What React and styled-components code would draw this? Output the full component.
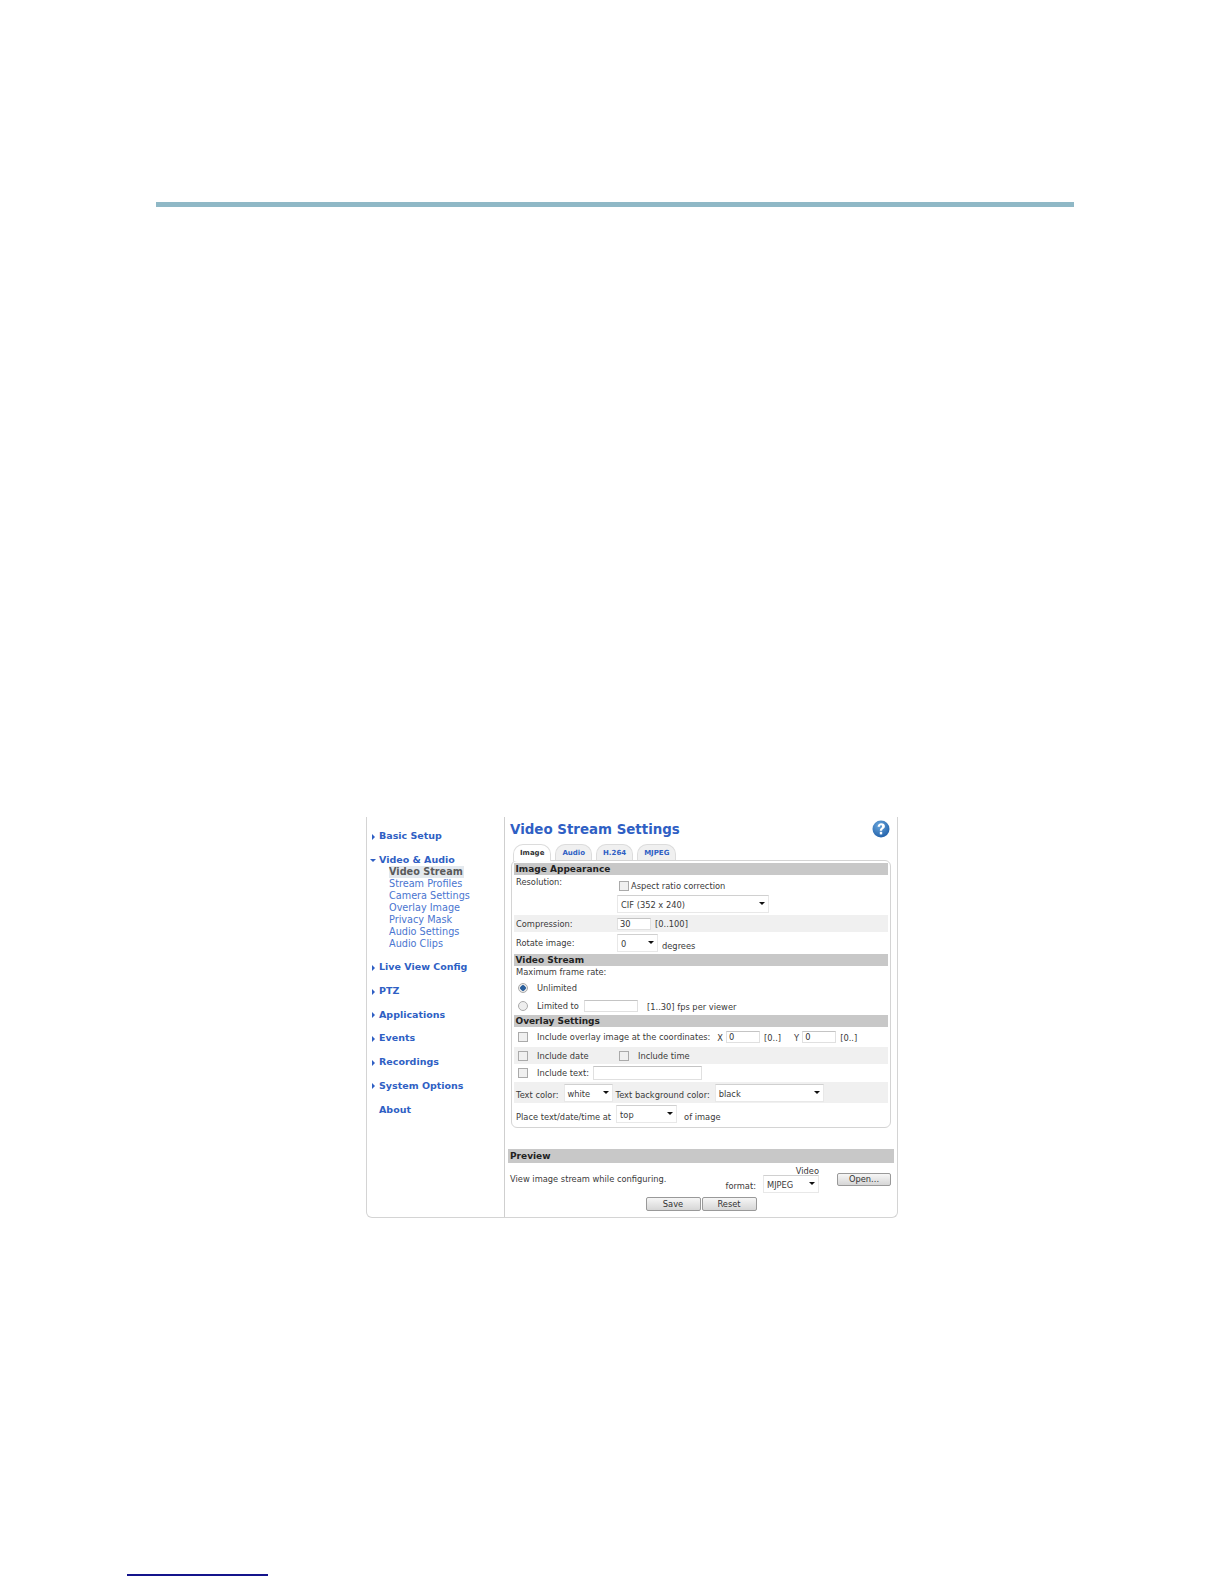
import React from 'react';
import styled, { createGlobalStyle } from 'styled-components';

const GlobalStyle = createGlobalStyle`
  html, body { margin: 0; padding: 0; background: #fff; }
  body { font-family: "DejaVu Sans", Verdana, sans-serif; }
`;

const navItems = [
  { label: 'Basic Setup' },
  { label: 'Video & Audio', open: true, children: ['Video Stream', 'Stream Profiles', 'Camera Settings', 'Overlay Image', 'Privacy Mask', 'Audio Settings', 'Audio Clips'] },
  { label: 'Live View Config' },
  { label: 'PTZ' },
  { label: 'Applications' },
  { label: 'Events' },
  { label: 'Recordings' },
  { label: 'System Options' },
  { label: 'About', leaf: true },
];

const Select = ({ width, children }) => (
  <SelectBox $width={width}>
    {children}
    <Caret />
  </SelectBox>
);

const HelpIcon = () => (
  <svg width="18" height="18" viewBox="0 0 18 18">
    <defs>
      <radialGradient id="helpFill" cx="40%" cy="30%" r="75%">
        <stop offset="0" stopColor="#6aa6dc" />
        <stop offset="1" stopColor="#1f5fa8" />
      </radialGradient>
    </defs>
    <circle cx="9" cy="9" r="8.5" fill="url(#helpFill)" />
    <path d="M5.6 6.8C5.8 4.4 7.3 3.2 9.3 3.2c2.2 0 3.6 1.2 3.6 3 0 1.5-.9 2.2-1.8 2.9-.7.5-1 .9-1 1.7H7.8c0-1.5.4-2.2 1.3-2.9.7-.5 1-.9 1-1.5 0-.7-.4-1.1-1-1.1-.7 0-1.1.5-1.2 1.4z" fill="#fff" />
    <rect x="7.8" y="11.8" width="2.4" height="2.6" fill="#fff" />
  </svg>
);

export default function App() {
  return (
    <Page>
      <GlobalStyle />
      <Rule />
      <Shot>
        <Sidebar>
          {navItems.map((item) => (
            <NavGroup key={item.label}>
              <NavTitle>
                {!item.leaf && <NavArrow $open={item.open} />}
                {item.label}
              </NavTitle>
              {item.children && item.children.map((child, i) => (
                <SubItem key={child} $active={i === 0}>{child}</SubItem>
              ))}
            </NavGroup>
          ))}
        </Sidebar>
        <Main>
          <TitleRow>
            <Title>Video Stream Settings</Title>
            <HelpIcon />
          </TitleRow>
          <Tabs>
            <Tab $active>Image</Tab>
            <Tab>Audio</Tab>
            <Tab>H.264</Tab>
            <Tab>MJPEG</Tab>
          </Tabs>
          <TabPanel>
            <SectionHead>Image Appearance</SectionHead>
            <FormRow $height={40} $top>
              <Label>Resolution:</Label>
              <Stack>
                <Inline><Check />Aspect ratio correction</Inline>
                <Select width={152}>CIF (352 x 240)</Select>
              </Stack>
            </FormRow>
            <FormRow $height={17} $shade>
              <Label>Compression:</Label>
              <TextInput $width={34} defaultValue="30" />
              <Note>[0..100]</Note>
            </FormRow>
            <FormRow $height={22}>
              <Label>Rotate image:</Label>
              <Select width={41}>0</Select>
              <Note $low>degrees</Note>
            </FormRow>
            <SectionHead>Video Stream</SectionHead>
            <FormRow $height={12}><Label>Maximum frame rate:</Label></FormRow>
            <FormRow $height={19}>
              <Radio $checked /><Text>Unlimited</Text>
            </FormRow>
            <FormRow $height={18}>
              <Radio /><Text $width={44}>Limited to</Text>
              <TextInput $width={54} />
              <Note $left={9}>[1..30] fps per viewer</Note>
            </FormRow>
            <SectionHead>Overlay Settings</SectionHead>
            <FormRow $height={20}>
              <Check $gap /><Text>Include overlay image at the coordinates:</Text>
              <Note $left={4}>X</Note><TextInput $width={34} defaultValue="0" /><Note>[0..]</Note>
              <Note $left={10}>Y</Note><TextInput $width={34} defaultValue="0" /><Note>[0..]</Note>
            </FormRow>
            <FormRow $height={17} $shade>
              <Check $gap /><Text $width={77}>Include date</Text>
              <Check $gap /><Text>Include time</Text>
            </FormRow>
            <FormRow $height={18}>
              <Check $gap /><Text $width={53}>Include text:</Text>
              <TextInput $width={109} $height={14} />
            </FormRow>
            <FormRow $height={21} $shade>
              <Label $auto>Text color:</Label>
              <Select width={49}>white</Select>
              <Label $auto $left={3}>Text background color:</Label>
              <Select width={109}>black</Select>
            </FormRow>
            <FormRow $height={22}>
              <Label $auto>Place text/date/time at</Label>
              <Select width={61}>top</Select>
              <Note $low $left={7}>of image</Note>
            </FormRow>
          </TabPanel>
          <PreviewHead>Preview</PreviewHead>
          <PreviewRow>
            <Text>View image stream while configuring.</Text>
            <FormatWrap>
              <FormatTop>Video</FormatTop>
              <FormatLine>
                <FormatLabel>format:</FormatLabel>
                <Select width={56}>MJPEG</Select>
              </FormatLine>
            </FormatWrap>
            <OpenButton>Open...</OpenButton>
          </PreviewRow>
          <Actions>
            <ActionButton>Save</ActionButton>
            <ActionButton>Reset</ActionButton>
          </Actions>
        </Main>
      </Shot>
      <FootLink />
    </Page>
  );
}

const Page = styled.div`
  width: 1224px;
  height: 1584px;
  padding-top: 202px;
  box-sizing: border-box;
  overflow: hidden;
  background: #fff;
`;

const Rule = styled.div`
  width: 918px;
  height: 5px;
  margin-left: 156px;
  background: #8fb8c6;
`;

const Shot = styled.div`
  display: flex;
  width: 532px;
  height: 401px;
  margin: 610px 0 0 366px;
  box-sizing: border-box;
  border: 1px solid #d4d4d4;
  border-top: none;
  border-radius: 0 0 6px 6px;
  font-size: 8.3px;
  color: #3a3a3a;
`;

const Sidebar = styled.nav`
  width: 138px;
  flex: none;
  box-sizing: border-box;
  padding-top: 13px;
  border-right: 1px solid #cfcfcf;
`;

const NavGroup = styled.div`
  margin-bottom: 11px;
`;

const NavTitle = styled.div`
  position: relative;
  height: 12.7px;
  padding-left: 12px;
  font-size: 9.5px;
  font-weight: bold;
  line-height: 12.7px;
  color: #2f5fc4;
`;

const NavArrow = styled.span`
  position: absolute;
  left: ${(p) => (p.$open ? '3px' : '5px')};
  top: ${(p) => (p.$open ? '5px' : '3.5px')};
  width: 0;
  height: 0;
  border-style: solid;
  border-color: transparent;
  ${(p) => (p.$open
    ? 'border-width: 3px 3px 0; border-top-color: #2f5fc4;'
    : 'border-width: 3px 0 3px 3px; border-left-color: #2f5fc4;')}
`;

const SubItem = styled.div`
  width: fit-content;
  height: 12px;
  margin-left: 22px;
  padding: 0 1px 0 0;
  font-size: 9.7px;
  line-height: 11.6px;
  color: ${(p) => (p.$active ? '#5a5a5a' : '#4a75d0')};
  font-weight: ${(p) => (p.$active ? 'bold' : 'normal')};
  background: ${(p) => (p.$active ? '#e4e9ee' : 'transparent')};
`;

const Main = styled.main`
  flex: 1;
  min-width: 0;
  padding: 0 3px 0 6px;
`;

const TitleRow = styled.div`
  display: flex;
  align-items: center;
  justify-content: space-between;
  height: 24px;
  margin-left: -1px;
  padding: 0 4px 0 0;
`;

const Title = styled.h1`
  margin: 0;
  font-size: 13.4px;
  font-weight: bold;
  color: #2f5fc4;
`;

const Tabs = styled.div`
  position: relative;
  z-index: 1;
  display: flex;
  gap: 4px;
  height: 16px;
  margin-top: 3px;
  padding-left: 2px;
`;

const Tab = styled.div`
  height: ${(p) => (p.$active ? '17px' : '16px')};
  padding: 0 6px;
  box-sizing: border-box;
  border: 1px solid #dcdcdc;
  border-bottom: none;
  border-radius: 10px 10px 0 0;
  font-size: 7px;
  font-weight: bold;
  line-height: 16px;
  color: ${(p) => (p.$active ? '#333' : '#2f5fc4')};
  background: ${(p) => (p.$active ? '#fff' : '#f0f0f0')};
`;

const TabPanel = styled.div`
  box-sizing: border-box;
  width: 380px;
  padding: 2px;
  border: 1px solid #d4d4d4;
  border-radius: 6px;
`;

const SectionHead = styled.div`
  height: 12px;
  padding-left: 1.5px;
  font-size: 9px;
  font-weight: bold;
  line-height: 13px;
  color: #222;
  background: #c8c8c8;
`;

const FormRow = styled.div`
  display: flex;
  align-items: ${(p) => (p.$top ? 'flex-start' : 'center')};
  height: ${(p) => p.$height}px;
  padding-left: 2px;
  background: ${(p) => (p.$shade ? '#f0f0f0' : 'transparent')};
`;

const Label = styled.span`
  flex: none;
  width: ${(p) => (p.$auto ? 'auto' : '101px')};
  margin-left: ${(p) => p.$left || 0}px;
  margin-right: ${(p) => (p.$auto ? '5px' : '0')};
  padding-top: ${(p) => (p.$auto ? '5px' : '0')};
  line-height: 14px;
  white-space: nowrap;
`;

const Text = styled.span`
  flex: none;
  width: ${(p) => (p.$width ? `${p.$width}px` : 'auto')};
  margin-right: 3px;
  white-space: nowrap;
`;

const Note = styled.span`
  flex: none;
  margin-left: ${(p) => (p.$left !== undefined ? p.$left : 4)}px;
  margin-right: 3px;
  padding-top: ${(p) => (p.$low ? '5px' : '1px')};
  white-space: nowrap;
`;

const Stack = styled.div`
  display: flex;
  flex-direction: column;
  gap: 3px;
  padding-top: 5px;
`;

const Inline = styled.div`
  display: flex;
  align-items: center;
  height: 12px;
  padding-left: 2px;
  white-space: nowrap;
`;

const Check = styled.span`
  flex: none;
  width: 8px;
  height: 8px;
  margin: 0 ${(p) => (p.$gap ? '9px' : '2px')} 0 ${(p) => (p.$gap ? '2px' : '0')};
  border: 1px solid #aaa;
  background: #f0f0f0;
`;

const Radio = styled.span`
  flex: none;
  box-sizing: border-box;
  width: 10px;
  height: 10px;
  margin: 0 9px 0 2px;
  border: 1px solid #aaa;
  border-radius: 50%;
  background: ${(p) => (p.$checked ? 'radial-gradient(circle, #2a5f9c 0 2.5px, #e8e8e8 3px)' : '#eee')};
`;

const TextInput = styled.input`
  flex: none;
  box-sizing: border-box;
  width: ${(p) => p.$width}px;
  height: ${(p) => p.$height || 12}px;
  padding: 0 2px;
  border: 1px solid #e0e0e0;
  border-top-color: #c4c4c4;
  border-radius: 0;
  font: 8.3px "DejaVu Sans", Verdana, sans-serif;
  color: #333;
  background: #fff;
`;

const SelectBox = styled.div`
  flex: none;
  position: relative;
  box-sizing: border-box;
  width: ${(p) => p.$width}px;
  height: 18px;
  padding-left: 3px;
  border: 1px solid #e8e8e8;
  border-top-color: #d0d0d0;
  line-height: 19px;
  background: #fff;
`;

const Caret = styled.span`
  position: absolute;
  right: 3px;
  top: 6px;
  width: 0;
  height: 0;
  border-style: solid;
  border-width: 3px 3px 0;
  border-color: #111 transparent transparent;
`;

const PreviewHead = styled.div`
  height: 14px;
  margin: 21px 0 0 -3px;
  padding-left: 2px;
  font-size: 9px;
  font-weight: bold;
  line-height: 15px;
  color: #222;
  background: #c8c8c8;
`;

const PreviewRow = styled.div`
  display: flex;
  align-items: center;
  height: 32px;
  margin-left: -1px;
  padding-right: 3px;
`;

const FormatWrap = styled.div`
  display: flex;
  flex-direction: column;
  align-items: flex-end;
  margin-left: auto;
`;

const FormatTop = styled.span`
  height: 10px;
  line-height: 12px;
`;

const FormatLine = styled.div`
  display: flex;
  align-items: flex-end;
`;

const FormatLabel = styled.span`
  margin-right: 7px;
  line-height: 14px;
`;

const PlainButton = styled.button`
  box-sizing: border-box;
  padding: 0;
  border: 1px solid #999;
  border-radius: 2px;
  font: 8.3px "DejaVu Sans", Verdana, sans-serif;
  line-height: 10px;
  color: #333;
  background: linear-gradient(#f6f6f6, #d6d6d6);
`;

const OpenButton = styled(PlainButton)`
  width: 54px;
  height: 13px;
  margin-left: 18px;
`;

const ActionButton = styled(PlainButton)`
  width: 55px;
  height: 14px;
`;

const Actions = styled.div`
  display: flex;
  justify-content: center;
  gap: 1px;
  margin: 2px 0 0 -3px;
`;

const FootLink = styled.div`
  width: 141px;
  height: 2px;
  margin: 356px 0 0 127px;
  background: #14148c;
`;
